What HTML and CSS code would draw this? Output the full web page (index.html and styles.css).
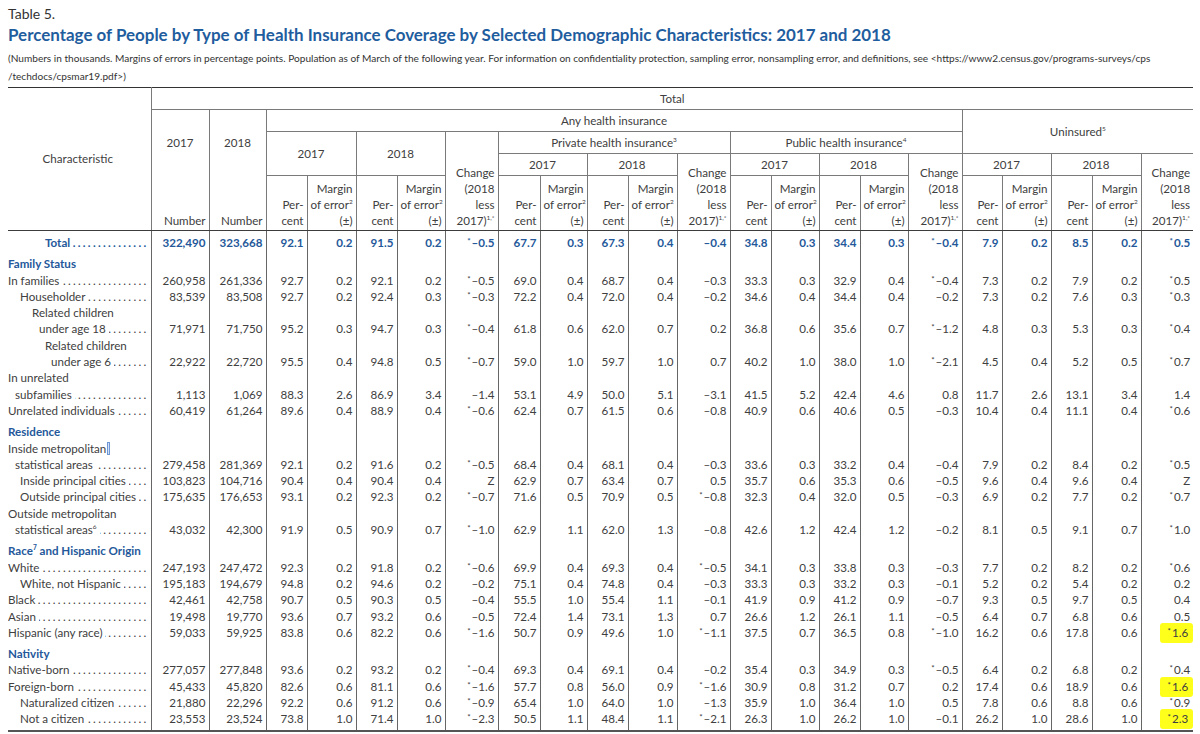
FILE: index.html
```html
<!DOCTYPE html>
<html lang="en">
<head>
<meta charset="utf-8">
<title>Table 5</title>
<link rel="stylesheet" href="styles.css">
</head>
<body>
<div class="page">
<div class="tnum">Table 5.</div>
<h1 class="title">Percentage of People by Type of Health Insurance Coverage by Selected Demographic Characteristics: 2017 and 2018</h1>
<p class="note">(Numbers in thousands. Margins of errors in percentage points. Population as of March of the following year. For information on confidentiality protection, sampling error, nonsampling error, and definitions, see &lt;https://www2.census.gov/programs-surveys/cps<br>/techdocs/cpsmar19.pdf&gt;)</p>
<table class="t">
<colgroup>
<col class="w143"><col class="w58"><col class="w57">
<col class="w41"><col class="w49"><col class="w41"><col class="w48"><col class="w53">
<col class="w42"><col class="w47"><col class="w41"><col class="w49"><col class="w53">
<col class="w41"><col class="w48"><col class="w41"><col class="w48"><col class="w54">
<col class="w40"><col class="w49"><col class="w41"><col class="w49"><col class="w52">
</colgroup>
<thead>
<tr class="rA"><th rowspan="5" class="ch hb">Characteristic</th><th colspan="22">Total</th></tr>
<tr class="rB"><th rowspan="3" class="yr">2017</th><th rowspan="3" class="yr">2018</th><th colspan="15">Any health insurance</th><th colspan="5" rowspan="2">Uninsured<sup>5</sup></th></tr>
<tr class="rC"><th colspan="2" rowspan="2">2017</th><th colspan="2" rowspan="2">2018</th><th rowspan="3" class="bt hb">Change<br>(2018<br>less<br>2017)<sup>1,*</sup></th><th colspan="5">Private health insurance<sup>3</sup></th><th colspan="5">Public health insurance<sup>4</sup></th></tr>
<tr class="rD"><th colspan="2">2017</th><th colspan="2">2018</th><th rowspan="2" class="bt hb">Change<br>(2018<br>less<br>2017)<sup>1,*</sup></th><th colspan="2">2017</th><th colspan="2">2018</th><th rowspan="2" class="bt hb">Change<br>(2018<br>less<br>2017)<sup>1,*</sup></th><th colspan="2">2017</th><th colspan="2">2018</th><th rowspan="2" class="bt hb">Change<br>(2018<br>less<br>2017)<sup>1,*</sup></th></tr>
<tr class="rE">
<th class="bt hb nt">Number</th><th class="bt hb nt">Number</th>
<th class="bt hb">Per-<br>cent</th><th class="bt hb">Margin<br>of error<sup>2</sup><br>(±)</th><th class="bt hb">Per-<br>cent</th><th class="bt hb">Margin<br>of error<sup>2</sup><br>(±)</th>
<th class="bt hb">Per-<br>cent</th><th class="bt hb">Margin<br>of error<sup>2</sup><br>(±)</th><th class="bt hb">Per-<br>cent</th><th class="bt hb">Margin<br>of error<sup>2</sup><br>(±)</th>
<th class="bt hb">Per-<br>cent</th><th class="bt hb">Margin<br>of error<sup>2</sup><br>(±)</th><th class="bt hb">Per-<br>cent</th><th class="bt hb">Margin<br>of error<sup>2</sup><br>(±)</th>
<th class="bt hb">Per-<br>cent</th><th class="bt hb">Margin<br>of error<sup>2</sup><br>(±)</th><th class="bt hb">Per-<br>cent</th><th class="bt hb">Margin<br>of error<sup>2</sup><br>(±)</th>
</tr>
</thead>
<tbody>
<tr class="tot"><td class="c"><div class="ld i37"><span>Total</span></div></td><td>322,490</td><td>323,668</td><td>92.1</td><td>0.2</td><td>91.5</td><td>0.2</td><td><i class="a">*</i>–0.5</td><td>67.7</td><td>0.3</td><td>67.3</td><td>0.4</td><td>–0.4</td><td>34.8</td><td>0.3</td><td>34.4</td><td>0.3</td><td><i class="a">*</i>–0.4</td><td>7.9</td><td>0.2</td><td>8.5</td><td>0.2</td><td><i class="a">*</i>0.5</td></tr>

<tr class="sec"><td class="c">Family Status</td><td></td><td></td><td></td><td></td><td></td><td></td><td></td><td></td><td></td><td></td><td></td><td></td><td></td><td></td><td></td><td></td><td></td><td></td><td></td><td></td><td></td><td></td></tr>
<tr><td class="c"><div class="ld"><span>In families</span></div></td><td>260,958</td><td>261,336</td><td>92.7</td><td>0.2</td><td>92.1</td><td>0.2</td><td><i class="a">*</i>–0.5</td><td>69.0</td><td>0.4</td><td>68.7</td><td>0.4</td><td>–0.3</td><td>33.3</td><td>0.3</td><td>32.9</td><td>0.4</td><td><i class="a">*</i>–0.4</td><td>7.3</td><td>0.2</td><td>7.9</td><td>0.2</td><td><i class="a">*</i>0.5</td></tr>
<tr><td class="c"><div class="ld i12"><span>Householder</span></div></td><td>83,539</td><td>83,508</td><td>92.7</td><td>0.2</td><td>92.4</td><td>0.3</td><td><i class="a">*</i>–0.3</td><td>72.2</td><td>0.4</td><td>72.0</td><td>0.4</td><td>–0.2</td><td>34.6</td><td>0.4</td><td>34.4</td><td>0.4</td><td>–0.2</td><td>7.3</td><td>0.2</td><td>7.6</td><td>0.3</td><td><i class="a">*</i>0.3</td></tr>
<tr><td class="c"><div class="i24">Related children</div><div class="ld i31"><span>under age 18</span></div></td><td>71,971</td><td>71,750</td><td>95.2</td><td>0.3</td><td>94.7</td><td>0.3</td><td><i class="a">*</i>–0.4</td><td>61.8</td><td>0.6</td><td>62.0</td><td>0.7</td><td>0.2</td><td>36.8</td><td>0.6</td><td>35.6</td><td>0.7</td><td><i class="a">*</i>–1.2</td><td>4.8</td><td>0.3</td><td>5.3</td><td>0.3</td><td><i class="a">*</i>0.4</td></tr>
<tr><td class="c"><div class="i37">Related children</div><div class="ld i43"><span>under age 6</span></div></td><td>22,922</td><td>22,720</td><td>95.5</td><td>0.4</td><td>94.8</td><td>0.5</td><td><i class="a">*</i>–0.7</td><td>59.0</td><td>1.0</td><td>59.7</td><td>1.0</td><td>0.7</td><td>40.2</td><td>1.0</td><td>38.0</td><td>1.0</td><td><i class="a">*</i>–2.1</td><td>4.5</td><td>0.4</td><td>5.2</td><td>0.5</td><td><i class="a">*</i>0.7</td></tr>
<tr><td class="c"><div>In unrelated</div><div class="ld i7"><span>subfamilies</span></div></td><td>1,113</td><td>1,069</td><td>88.3</td><td>2.6</td><td>86.9</td><td>3.4</td><td>–1.4</td><td>53.1</td><td>4.9</td><td>50.0</td><td>5.1</td><td>–3.1</td><td>41.5</td><td>5.2</td><td>42.4</td><td>4.6</td><td>0.8</td><td>11.7</td><td>2.6</td><td>13.1</td><td>3.4</td><td>1.4</td></tr>
<tr><td class="c"><div class="ld"><span>Unrelated individuals</span></div></td><td>60,419</td><td>61,264</td><td>89.6</td><td>0.4</td><td>88.9</td><td>0.4</td><td><i class="a">*</i>–0.6</td><td>62.4</td><td>0.7</td><td>61.5</td><td>0.6</td><td>–0.8</td><td>40.9</td><td>0.6</td><td>40.6</td><td>0.5</td><td>–0.3</td><td>10.4</td><td>0.4</td><td>11.1</td><td>0.4</td><td><i class="a">*</i>0.6</td></tr>

<tr class="sec"><td class="c">Residence</td><td></td><td></td><td></td><td></td><td></td><td></td><td></td><td></td><td></td><td></td><td></td><td></td><td></td><td></td><td></td><td></td><td></td><td></td><td></td><td></td><td></td><td></td></tr>
<tr><td class="c"><div>Inside metropolitan<span class="caret"></span></div><div class="ld i7"><span>statistical areas</span></div></td><td>279,458</td><td>281,369</td><td>92.1</td><td>0.2</td><td>91.6</td><td>0.2</td><td><i class="a">*</i>–0.5</td><td>68.4</td><td>0.4</td><td>68.1</td><td>0.4</td><td>–0.3</td><td>33.6</td><td>0.3</td><td>33.2</td><td>0.4</td><td>–0.4</td><td>7.9</td><td>0.2</td><td>8.4</td><td>0.2</td><td><i class="a">*</i>0.5</td></tr>
<tr><td class="c"><div class="ld i12"><span>Inside principal cities</span></div></td><td>103,823</td><td>104,716</td><td>90.4</td><td>0.4</td><td>90.4</td><td>0.4</td><td>Z</td><td>62.9</td><td>0.7</td><td>63.4</td><td>0.7</td><td>0.5</td><td>35.7</td><td>0.6</td><td>35.3</td><td>0.6</td><td>–0.5</td><td>9.6</td><td>0.4</td><td>9.6</td><td>0.4</td><td>Z</td></tr>
<tr><td class="c"><div class="ld i12"><span>Outside principal cities</span></div></td><td>175,635</td><td>176,653</td><td>93.1</td><td>0.2</td><td>92.3</td><td>0.2</td><td><i class="a">*</i>–0.7</td><td>71.6</td><td>0.5</td><td>70.9</td><td>0.5</td><td><i class="a">*</i>–0.8</td><td>32.3</td><td>0.4</td><td>32.0</td><td>0.5</td><td>–0.3</td><td>6.9</td><td>0.2</td><td>7.7</td><td>0.2</td><td><i class="a">*</i>0.7</td></tr>
<tr><td class="c"><div>Outside metropolitan</div><div class="ld i7"><span>statistical areas<sup>6</sup></span></div></td><td>43,032</td><td>42,300</td><td>91.9</td><td>0.5</td><td>90.9</td><td>0.7</td><td><i class="a">*</i>–1.0</td><td>62.9</td><td>1.1</td><td>62.0</td><td>1.3</td><td>–0.8</td><td>42.6</td><td>1.2</td><td>42.4</td><td>1.2</td><td>–0.2</td><td>8.1</td><td>0.5</td><td>9.1</td><td>0.7</td><td><i class="a">*</i>1.0</td></tr>

<tr class="sec"><td class="c">Race<sup>7</sup> and Hispanic Origin</td><td></td><td></td><td></td><td></td><td></td><td></td><td></td><td></td><td></td><td></td><td></td><td></td><td></td><td></td><td></td><td></td><td></td><td></td><td></td><td></td><td></td><td></td></tr>
<tr><td class="c"><div class="ld"><span>White</span></div></td><td>247,193</td><td>247,472</td><td>92.3</td><td>0.2</td><td>91.8</td><td>0.2</td><td><i class="a">*</i>–0.6</td><td>69.9</td><td>0.4</td><td>69.3</td><td>0.4</td><td><i class="a">*</i>–0.5</td><td>34.1</td><td>0.3</td><td>33.8</td><td>0.3</td><td>–0.3</td><td>7.7</td><td>0.2</td><td>8.2</td><td>0.2</td><td><i class="a">*</i>0.6</td></tr>
<tr><td class="c"><div class="ld i12"><span>White, not Hispanic</span></div></td><td>195,183</td><td>194,679</td><td>94.8</td><td>0.2</td><td>94.6</td><td>0.2</td><td>–0.2</td><td>75.1</td><td>0.4</td><td>74.8</td><td>0.4</td><td>–0.3</td><td>33.3</td><td>0.3</td><td>33.2</td><td>0.3</td><td>–0.1</td><td>5.2</td><td>0.2</td><td>5.4</td><td>0.2</td><td>0.2</td></tr>
<tr><td class="c"><div class="ld"><span>Black</span></div></td><td>42,461</td><td>42,758</td><td>90.7</td><td>0.5</td><td>90.3</td><td>0.5</td><td>–0.4</td><td>55.5</td><td>1.0</td><td>55.4</td><td>1.1</td><td>–0.1</td><td>41.9</td><td>0.9</td><td>41.2</td><td>0.9</td><td>–0.7</td><td>9.3</td><td>0.5</td><td>9.7</td><td>0.5</td><td>0.4</td></tr>
<tr><td class="c"><div class="ld"><span>Asian</span></div></td><td>19,498</td><td>19,770</td><td>93.6</td><td>0.7</td><td>93.2</td><td>0.6</td><td>–0.5</td><td>72.4</td><td>1.4</td><td>73.1</td><td>1.3</td><td>0.7</td><td>26.6</td><td>1.2</td><td>26.1</td><td>1.1</td><td>–0.5</td><td>6.4</td><td>0.7</td><td>6.8</td><td>0.6</td><td>0.5</td></tr>
<tr><td class="c"><div class="ld"><span>Hispanic (any race)</span></div></td><td>59,033</td><td>59,925</td><td>83.8</td><td>0.6</td><td>82.2</td><td>0.6</td><td><i class="a">*</i>–1.6</td><td>50.7</td><td>0.9</td><td>49.6</td><td>1.0</td><td><i class="a">*</i>–1.1</td><td>37.5</td><td>0.7</td><td>36.5</td><td>0.8</td><td><i class="a">*</i>–1.0</td><td>16.2</td><td>0.6</td><td>17.8</td><td>0.6</td><td><span class="hl"><i class="a">*</i>1.6</span></td></tr>

<tr class="sec"><td class="c">Nativity</td><td></td><td></td><td></td><td></td><td></td><td></td><td></td><td></td><td></td><td></td><td></td><td></td><td></td><td></td><td></td><td></td><td></td><td></td><td></td><td></td><td></td><td></td></tr>
<tr><td class="c"><div class="ld"><span>Native-born</span></div></td><td>277,057</td><td>277,848</td><td>93.6</td><td>0.2</td><td>93.2</td><td>0.2</td><td><i class="a">*</i>–0.4</td><td>69.3</td><td>0.4</td><td>69.1</td><td>0.4</td><td>–0.2</td><td>35.4</td><td>0.3</td><td>34.9</td><td>0.3</td><td><i class="a">*</i>–0.5</td><td>6.4</td><td>0.2</td><td>6.8</td><td>0.2</td><td><i class="a">*</i>0.4</td></tr>
<tr><td class="c"><div class="ld"><span>Foreign-born</span></div></td><td>45,433</td><td>45,820</td><td>82.6</td><td>0.6</td><td>81.1</td><td>0.6</td><td><i class="a">*</i>–1.6</td><td>57.7</td><td>0.8</td><td>56.0</td><td>0.9</td><td><i class="a">*</i>–1.6</td><td>30.9</td><td>0.8</td><td>31.2</td><td>0.7</td><td>0.2</td><td>17.4</td><td>0.6</td><td>18.9</td><td>0.6</td><td><span class="hl"><i class="a">*</i>1.6</span></td></tr>
<tr><td class="c"><div class="ld i12"><span>Naturalized citizen</span></div></td><td>21,880</td><td>22,296</td><td>92.2</td><td>0.6</td><td>91.2</td><td>0.6</td><td><i class="a">*</i>–0.9</td><td>65.4</td><td>1.0</td><td>64.0</td><td>1.0</td><td>–1.3</td><td>35.9</td><td>1.0</td><td>36.4</td><td>1.0</td><td>0.5</td><td>7.8</td><td>0.6</td><td>8.8</td><td>0.6</td><td><i class="a">*</i>0.9</td></tr>
<tr class="last"><td class="c"><div class="ld i12"><span>Not a citizen</span></div></td><td>23,553</td><td>23,524</td><td>73.8</td><td>1.0</td><td>71.4</td><td>1.0</td><td><i class="a">*</i>–2.3</td><td>50.5</td><td>1.1</td><td>48.4</td><td>1.1</td><td><i class="a">*</i>–2.1</td><td>26.3</td><td>1.0</td><td>26.2</td><td>1.0</td><td>–0.1</td><td>26.2</td><td>1.0</td><td>28.6</td><td>1.0</td><td><span class="hl"><i class="a">*</i>2.3</span></td></tr>
</tbody>
</table>
</div>
</body>
</html>
```

FILE: styles.css
```css
* { box-sizing: border-box; }
html, body { margin: 0; background: #fff; }
body { font-family: Lato, "Open Sans", sans-serif; color: #444; }
.page { padding: 5px 7px 0 8px; }

.tnum { font-size: 14px; line-height: 18px; color: #333; }
.title { margin: 1px 0 0; font-size: 16.95px; line-height: 22px; font-weight: 700; color: #1f5d9e; white-space: nowrap; }
.note { margin: 3px 0 0; font-size: 10.1px; line-height: 18px; color: #333; white-space: nowrap; }

.t { border-collapse: collapse; table-layout: fixed; width: 1185px; margin-top: 2px; font-size: 11.6px; color: #404040; border-left: hidden; border-right: hidden; }
.w40 { width: 40px; } .w41 { width: 41px; } .w42 { width: 42px; } .w47 { width: 47px; }
.w48 { width: 48px; } .w49 { width: 49px; } .w52 { width: 52px; } .w53 { width: 53px; }
.w54 { width: 54px; } .w57 { width: 57px; } .w58 { width: 58px; } .w143 { width: 143px; }

.t th { font-weight: 400; border: 1px solid #7a7a7a; padding: 0 3px; line-height: 16px; text-align: center; vertical-align: middle; white-space: nowrap; }
.t th.bt { text-align: right; vertical-align: bottom; padding-bottom: 1px; }
.t th.hb { border-bottom-color: #3c3c3c; }
.t th.yr { border-bottom-style: hidden; }
.t th.nt { border-top-style: hidden; }
.t th sup, .t td sup { font-size: 6.5px; vertical-align: 5px; line-height: 0; }
.rA th { height: 22px; border-top: 1px solid #333; }
.rB th { height: 22px; }
.rC th { height: 22px; }
.rD th { height: 22px; }
.rE th { height: 55px; }
.ch { padding-left: 0 !important; }

.t td { border-left: 1px solid #666; border-right: 1px solid #666; border-top: none; border-bottom: none; padding: 0 3px 0 0; text-align: right; vertical-align: bottom; line-height: 16.3px; white-space: nowrap; }
.t td.c { text-align: left; padding: 0 2px 0 0; overflow: hidden; }
.t tr.tot td { font-weight: 700; color: #24589a; padding-top: 4px; }
.t tr.sec td { padding-top: 5px; }
.t tr.sec td.c { font-weight: 700; color: #24589a; }
.t tr.last td { padding-bottom: 2px; border-bottom: 2px solid #555; }

.ld { display: flex; }
.ld > span { flex: none; }
.ld::after { content: "..................................................................."; flex: 1 1 0; min-width: 0; overflow: hidden; white-space: nowrap; letter-spacing: 2.3px; direction: rtl; margin-left: 3px; }
.i7 { padding-left: 7px; } .i12 { padding-left: 12px; } .i24 { padding-left: 24px; } .i31 { padding-left: 31px; }
.i37 { padding-left: 37px; } .i43 { padding-left: 43px; }

.a { font-style: normal; font-size: 8px; vertical-align: 3px; line-height: 0; margin-right: 1px; }
.hl { display: inline-block; background: #ffff1c; border-radius: 3px; padding: 2px 5px 2px 8px; margin: -2px -3px -2px 0; line-height: 16px; }
.caret { display: inline-block; width: 3px; height: 13px; margin-left: 1px; vertical-align: -2px; background: #cfe0f7; border: 1px solid #6f97d6; }
```
